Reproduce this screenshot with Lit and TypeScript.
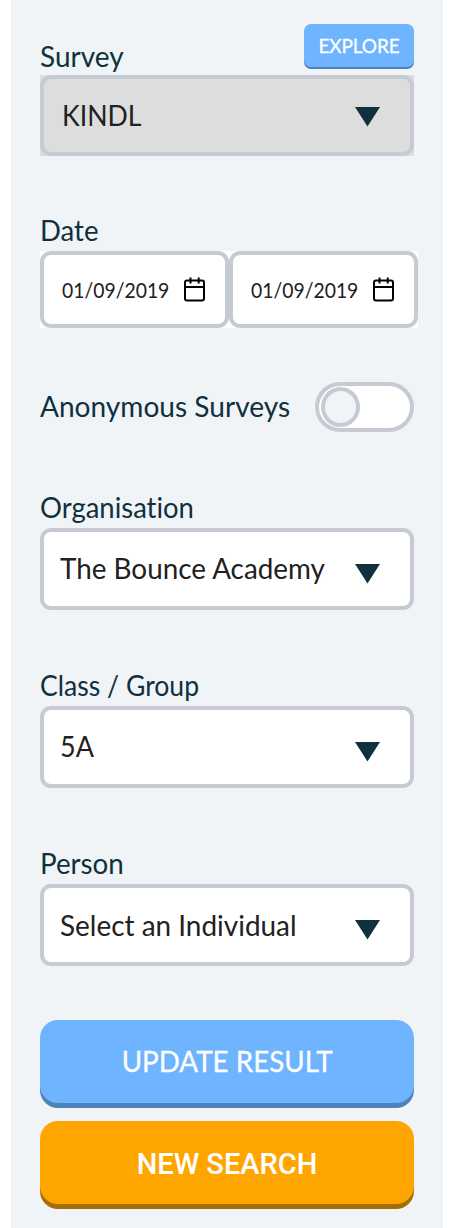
import { LitElement, html, css, svg } from "lit";
import { customElement } from "lit/decorators.js";

const arrow = html`<svg class="arrow" width="25" height="20" viewBox="0 0 25 20">
  <path d="M0 0H25L12.5 19.6Z" fill="#0f303d" />
</svg>`;

const calendar = html`<svg width="23" height="25" viewBox="0 0 23 25" fill="none" stroke="#000" stroke-width="2">
  ${svg`<rect x="2" y="3.4" width="19" height="20.2" rx="2" /><path d="M2 10H21M7.5 0.4V6.4M15.7 0.4V6.4" />`}
</svg>`;

@customElement("app-root")
export class AppRoot extends LitElement {
  static styles = css`
    :host {
      display: block;
      background: #fff;
      font-family: Lato, sans-serif;
      font-size: 29px;
      line-height: 36px;
      font-variant-ligatures: none;
      color: #0f303d;
    }
    * { box-sizing: border-box; }
    svg { display: block; flex: none; }
    .panel {
      width: 432px;
      height: 1228px;
      margin-left: 11px;
      padding: 24px 29px 0;
      background: #f0f4f7;
      overflow: hidden;
    }
    span { display: inline-block; white-space: nowrap; transform-origin: 0 50%; }
    .head { display: flex; justify-content: space-between; height: 51px; }
    .head .label { padding-top: 15px; transform: scaleX(0.965); }
    .label { display: block; height: 38px; line-height: 34px; }
    .explore {
      width: 110px;
      height: 43px;
      border-radius: 7px;
      background: #6eb4ff;
      box-shadow: 0 2px 0 #4e83ba;
      color: #fff;
      font-size: 19px;
      line-height: 43px;
      text-align: center;
      letter-spacing: -0.1px;
      -webkit-text-stroke: 0.3px #fff;
    }
    .select {
      display: flex;
      justify-content: space-between;
      height: 82px;
      padding: 18px 30px 0 16px;
      border: 4px solid #c6cad2;
      border-radius: 11px;
      background: #fff;
      color: #212121;
    }
    .select .arrow { margin-top: 14px; }
    .survey { height: 81px; background: #ddd; padding-left: 18px; }
    .survey span { transform: scaleX(0.92); }
    .survey .arrow { margin-top: 10px; }
    .square { background: #ddd; }
    .date-label { margin-top: 57px; transform: scaleX(0.95); }
    .dates { display: flex; width: 378px; height: 77px; background: #fff; }
    .date {
      display: flex;
      width: 189px;
      padding: 22px 19px 0 18px;
      justify-content: space-between;
      border: 4px solid #c6cad2;
      border-radius: 11px;
      color: #212121;
      font-size: 21px;
      line-height: 26px;
    }
    .date span { transform: scaleX(0.922); }
    .anon { display: flex; justify-content: space-between; height: 50px; margin-top: 54px; }
    .anon .name { padding-top: 6px; transform: scaleX(0.968); }
    .toggle {
      display: flex;
      align-items: center;
      width: 99px;
      height: 50px;
      padding-left: 2px;
      border: 4px solid #c6cad2;
      border-radius: 25px;
      background: #fff;
    }
    .knob { width: 39px; height: 40px; border: 4px solid #c6cad2; border-radius: 50%; background: #f0f4f7; }
    .org { margin-top: 58px; }
    .field + .field { margin-top: 58px; }
    .org .label { transform: scaleX(0.947); }
    .org .select span { transform: scaleX(0.96); }
    .group .label { transform: scaleX(0.917); }
    .group .select span { transform: scaleX(0.93); }
    .person .label { transform: scaleX(0.957); }
    .person .select { padding-top: 19px; }
    .person .select span { transform: scaleX(0.963); }
    .person .arrow { margin-top: 13px; }
    .button {
      height: 83px;
      border-radius: 18px;
      color: #fff;
      line-height: 83px;
      text-align: center;
    }
    .update { margin-top: 54px; background: #6eb4ff; box-shadow: 0 5px 0 #4e83ba; line-height: 82px; -webkit-text-stroke: 0.3px #fff; }
    .update span { transform: scaleX(0.958); transform-origin: 50% 50%; }
    .new { margin-top: 18px; background: #ffa500; box-shadow: 0 5px 0 #a66c05; font-family: Roboto, sans-serif; font-weight: 500; line-height: 86px; }
  `;

  private field(label: string, value: string, cls: string) {
    return html`<div class="field ${cls}">
      <span class="label">${label}</span>
      <div class="select"><span>${value}</span>${arrow}</div>
    </div>`;
  }

  render() {
    return html`<div class="panel">
      <div class="head"><span class="label">Survey</span><div class="explore"><span>EXPLORE</span></div></div>
      <div class="square"><div class="select survey"><span>KINDL</span>${arrow}</div></div>
      <span class="label date-label">Date</span>
      <div class="dates">
        <div class="date"><span>01/09/2019</span>${calendar}</div>
        <div class="date"><span>01/09/2019</span>${calendar}</div>
      </div>
      <div class="anon"><span class="name">Anonymous Surveys</span><div class="toggle"><div class="knob"></div></div></div>
      ${this.field("Organisation", "The Bounce Academy", "org")}
      ${this.field("Class / Group", "5A", "group")}
      ${this.field("Person", "Select an Individual", "person")}
      <div class="button update"><span>UPDATE RESULT</span></div>
      <div class="button new"><span>NEW SEARCH</span></div>
    </div>`;
  }
}
